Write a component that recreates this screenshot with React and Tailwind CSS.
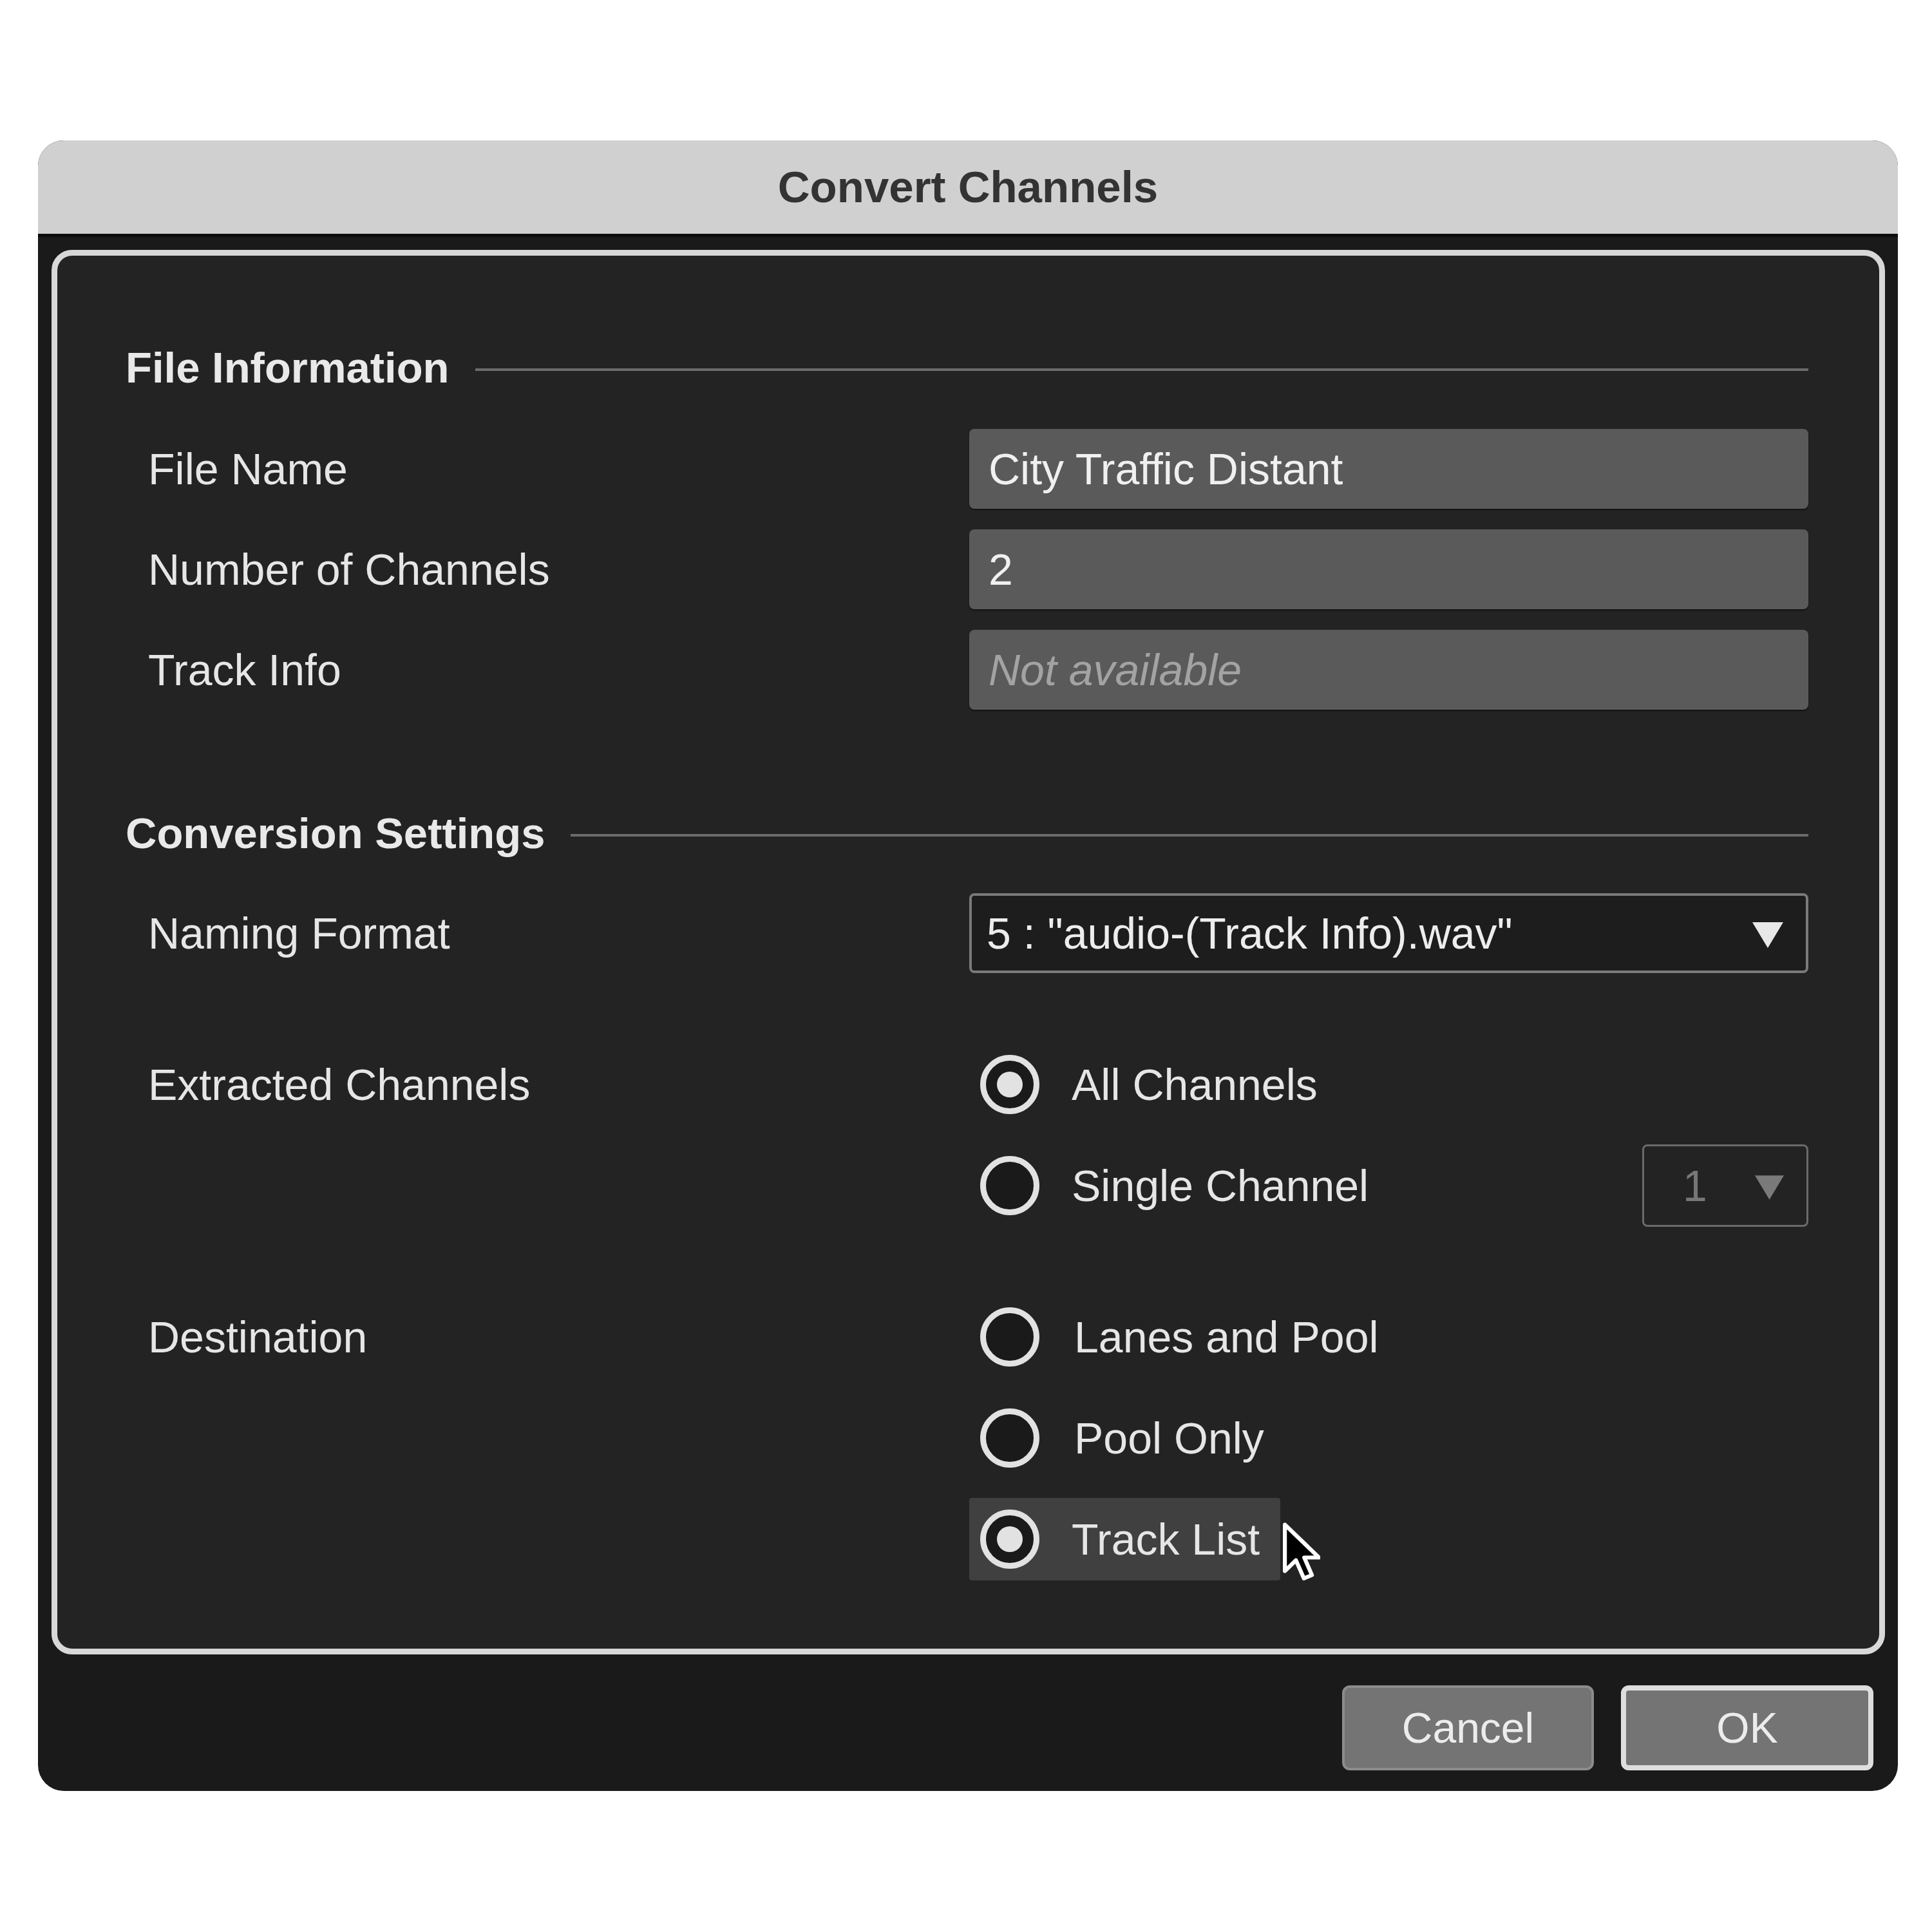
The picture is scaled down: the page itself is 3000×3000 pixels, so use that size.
import React from 'react';

const labelText = 'text-[68px] leading-none text-[#e6e6e6]';

function SectionHeading({ title }) {
  return (
    <div className="flex items-center h-[80px]">
      <span className="text-[67px] leading-none font-bold text-[#e9e9e9]">{title}</span>
      <div className="flex-1 h-[4px] ml-[40px] mt-[8px] bg-[#6b6b6b]" />
    </div>
  );
}

function InfoRow({ label, value, muted }) {
  return (
    <div className="flex">
      <div className={`w-[1310px] pl-[35px] h-[124px] flex items-center ${labelText}`}>{label}</div>
      <div className="flex-1 h-[124px] rounded-[8px] bg-[#5a5a5a] shadow-[0_2px_2px_rgba(0,0,0,0.45)] flex items-center pl-[30px]">
        {muted ? (
          <span className="text-[68px] leading-none italic text-[#a3a3a3]">{value}</span>
        ) : (
          <span className="text-[68px] leading-none text-[#f0f0f0]">{value}</span>
        )}
      </div>
    </div>
  );
}

function Radio({ checked }) {
  return (
    <div className="w-[92px] h-[92px] shrink-0 rounded-full border-[9px] border-[#e2e2e2] bg-[#1a1a1a] flex items-center justify-center">
      {checked && <div className="w-[40px] h-[40px] rounded-full bg-[#e2e2e2]" />}
    </div>
  );
}

function Triangle({ color, className }) {
  return (
    <svg className={className} viewBox="0 0 48 40">
      <polygon points="0,0 48,0 24,40" fill={color} />
    </svg>
  );
}

function Pointer() {
  return (
    <svg className="absolute left-full top-[34px] ml-[0px] w-[62px] h-[96px]" viewBox="0 0 13 20">
      <path
        d="M1.5 1.5 V16.6 L5.1 13.1 L7.7 19 L10.3 17.9 L7.8 12.2 H12.6 Z"
        fill="#000"
        stroke="#fff"
        strokeWidth="1.3"
        strokeLinejoin="round"
      />
    </svg>
  );
}

const App = () => {
  return (
    <div className="w-[3000px] h-[3000px] bg-white pt-[218px] pl-[59px] font-['Liberation_Sans',Arial,sans-serif]">
      <div className="w-[2888px] rounded-[40px] overflow-hidden bg-[#1a1a1a]">
        {/* Title bar */}
        <div className="h-[145px] bg-[#d0d0d0] border-b-[5px] border-[#0c0c0c] box-content flex items-center justify-center">
          <span className="text-[69px] leading-none font-bold text-[#333333]">Convert Channels</span>
        </div>

        <div className="pt-[20px] pl-[21px] pr-[20px]">
          {/* Settings panel */}
          <div className="border-[9px] border-[#d8d8d8] rounded-[32px] bg-[#232323] pt-[133px] pb-[106px] pl-[106px] pr-[110px] flex flex-col">
            <SectionHeading title="File Information" />

            <div className="mt-[56px] flex flex-col gap-[32px]">
              <InfoRow label="File Name" value="City Traffic Distant" />
              <InfoRow label="Number of Channels" value="2" />
              <InfoRow label="Track Info" value="Not available" muted />
            </div>

            <div className="mt-[151px]">
              <SectionHeading title="Conversion Settings" />
            </div>

            {/* Naming format */}
            <div className="mt-[54px] flex">
              <div className={`w-[1310px] pl-[35px] h-[124px] flex items-center ${labelText}`}>Naming Format</div>
              <div className="flex-1 h-[124px] rounded-[8px] border-[4px] border-[#7a7a7a] bg-[#1d1d1d] flex items-center pl-[23px] pr-[35px]">
                <span className="text-[68px] leading-none text-[#ededed]">5 : "audio-(Track Info).wav"</span>
                <Triangle color="#e8e8e8" className="ml-auto w-[48px] h-[40px] mt-[6px]" />
              </div>
            </div>

            {/* Extracted channels */}
            <div className="mt-[109px] flex">
              <div className={`w-[1310px] pl-[35px] h-[128px] flex items-center ${labelText}`}>Extracted Channels</div>
              <div className="flex-1 flex flex-col gap-[29px]">
                <div className="h-[128px] flex items-center pl-[17px] gap-[50px]">
                  <Radio checked />
                  <span className={labelText}>All Channels</span>
                </div>
                <div className="h-[128px] flex items-center pl-[17px] gap-[50px]">
                  <Radio />
                  <span className={labelText}>Single Channel</span>
                  <div className="ml-auto w-[258px] h-[128px] rounded-[8px] border-[3px] border-[#6a6a6a] flex items-center pl-[60px] pr-[35px]">
                    <span className="text-[68px] leading-none text-[#777777]">1</span>
                    <Triangle color="#7a7a7a" className="ml-auto w-[45px] h-[40px] mt-[6px]" />
                  </div>
                </div>
              </div>
            </div>

            {/* Destination */}
            <div className="mt-[107px] flex">
              <div className={`w-[1310px] pl-[35px] h-[128px] flex items-center ${labelText}`}>Destination</div>
              <div className="flex-1 flex flex-col gap-[29px]">
                <div className="h-[128px] flex items-center pl-[17px] gap-[54px]">
                  <Radio />
                  <span className={labelText}>Lanes and Pool</span>
                </div>
                <div className="h-[128px] flex items-center pl-[17px] gap-[54px]">
                  <Radio />
                  <span className={labelText}>Pool Only</span>
                </div>
                <div className="relative w-fit h-[128px] flex items-center pl-[17px] pr-[32px] gap-[50px] bg-[#404040] rounded-[4px]">
                  <Radio checked />
                  <span className={labelText}>Track List</span>
                  <Pointer />
                </div>
              </div>
            </div>
          </div>

          {/* Dialog buttons */}
          <div className="mt-[48px] pb-[32px] pr-[18px] flex justify-end gap-[42px]">
            <button className="w-[391px] h-[132px] rounded-[12px] bg-[#747474] border-[4px] border-[#8c8c8c] text-[66px] leading-none text-[#ececec]">
              Cancel
            </button>
            <button className="w-[392px] h-[132px] rounded-[12px] bg-[#747474] border-[8px] border-[#dedede] text-[66px] leading-none text-[#ececec]">
              OK
            </button>
          </div>
        </div>
      </div>
    </div>
  );
};

export default App;
